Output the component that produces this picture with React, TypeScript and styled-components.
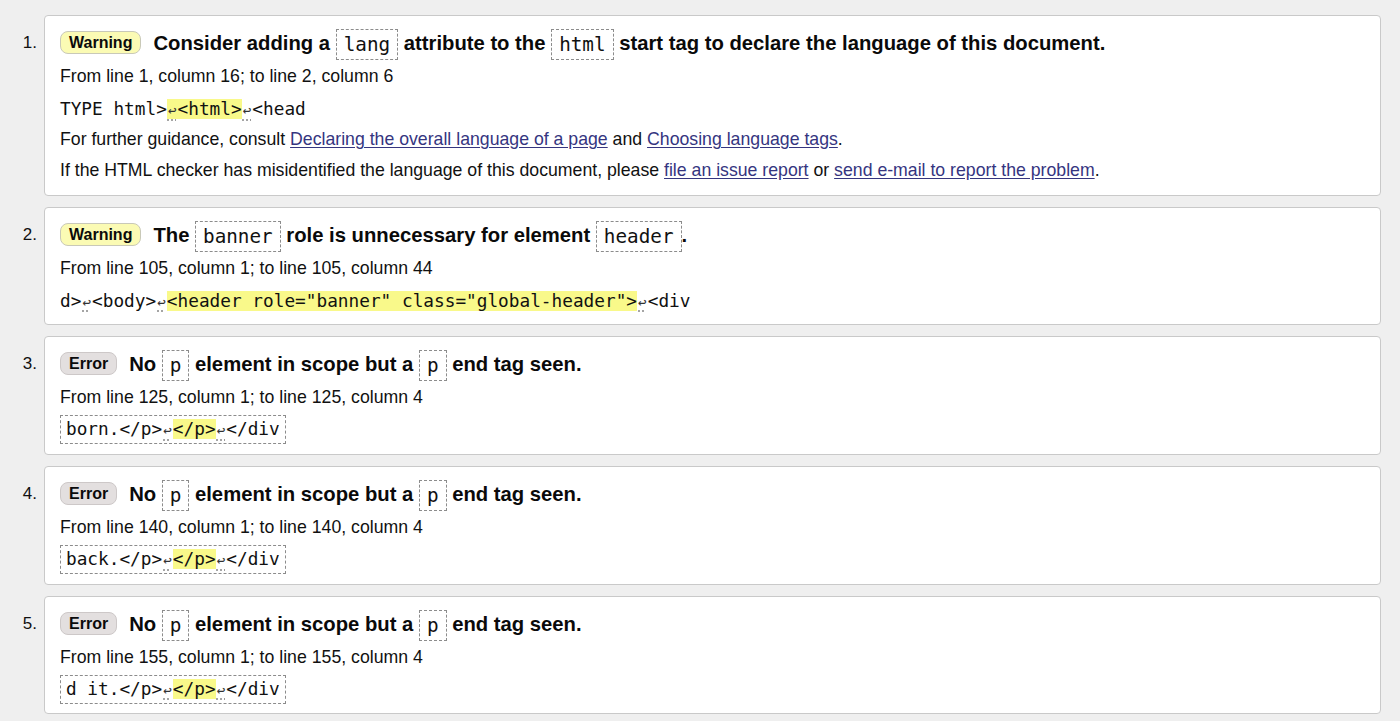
import React from "react";
import styled, { createGlobalStyle, css } from "styled-components";

const GlobalStyle = createGlobalStyle`
  html, body {
    margin: 0;
    padding: 0;
    background: #efefef;
  }
  body {
    font-family: "Liberation Sans", Arial, Helvetica, sans-serif;
    color: #111;
  }
`;

const List = styled.ol`
  list-style: none;
  margin: 0;
  padding: 15px 19px 0 0;
  display: flex;
  flex-direction: column;
  gap: 11px;
`;

const Item = styled.li`
  display: grid;
  grid-template-columns: 44px 1fr;
`;

const Num = styled.div`
  padding: 11px 7px 0 0;
  line-height: 34px;
  font-size: 17px;
  text-align: right;
  color: #111;
`;

const Card = styled.div`
  background: #fff;
  border: 1px solid #c9c9c9;
  border-radius: 4px;
  padding: 10px 15px 8.5px;
`;

const Title = styled.p`
  margin: 0 0 1px;
  font-size: 20.25px;
  font-weight: bold;
  line-height: 34px;
  color: #0a0a0a;
  white-space: nowrap;
`;

const Badge = styled.span<{ $kind: "warning" | "error" }>`
  display: inline-block;
  vertical-align: 2px;
  font-size: 16px;
  font-weight: bold;
  line-height: 21px;
  padding: 0 8px;
  margin-right: 12px;
  border-radius: 8px;
  ${(p) =>
    p.$kind === "warning"
      ? css`
          background: #fbfbb4;
          border: 1px solid #c9c9b8;
        `
      : css`
          background: #e3dfdf;
          border: 1px solid #cdc8c8;
        `}
`;

const Code = styled.code`
  display: inline-block;
  vertical-align: middle;
  font-family: "DejaVu Sans Mono", "Liberation Mono", monospace;
  font-weight: normal;
  font-size: 19.3px;
  line-height: 29px;
  padding: 0 7px;
  border: 1px dashed #8c8c8c;
  color: #111;
`;

const Line = styled.p`
  margin: 0;
  font-size: 17.7px;
  line-height: 31px;
  color: #111;
`;

const Link = styled.a`
  color: #35357f;
  text-decoration: underline;
  text-underline-offset: 2px;
`;

const Extract = styled.div`
  display: flex;
  align-items: flex-end;
  height: 32px;
`;

const ExtractCode = styled.code<{ $boxed?: boolean }>`
  display: inline-block;
  font-family: "DejaVu Sans Mono", "Liberation Mono", monospace;
  font-size: 17.75px;
  color: #111;
  white-space: pre;
  ${(p) =>
    p.$boxed
      ? css`
          line-height: 26px;
          padding: 0 5px;
          margin-bottom: 1px;
          border: 1px dashed #8c8c8c;
        `
      : css`
          line-height: 28px;
        `}
`;

const Mark = styled.mark`
  background: #f9f98a;
  color: inherit;
`;

const LfBox = styled.span`
  display: inline-block;
  width: 1ch;
  text-align: center;
  text-decoration: underline dotted #9a9a9a;
  text-underline-offset: 4px;
`;

const LfGlyph = styled.span`
  font-size: 0.8em;
  color: #333;
`;

const Lf = () => (
  <LfBox title="Line break">
    <LfGlyph>↩</LfGlyph>
  </LfBox>
);

export default function App() {
  return (
    <>
      <GlobalStyle />
      <List>
        <Item>
          <Num>1.</Num>
          <Card>
            <Title>
              <Badge $kind="warning">Warning</Badge>Consider adding a <Code>lang</Code> attribute to the{" "}
              <Code>html</Code> start tag to declare the language of this document.
            </Title>
            <Line>From line 1, column 16; to line 2, column 6</Line>
            <Extract>
              <ExtractCode>
                TYPE html&gt;
                <Mark>
                  <Lf />
                  &lt;html&gt;
                </Mark>
                <Lf />
                &lt;head
              </ExtractCode>
            </Extract>
            <Line>
              For further guidance, consult <Link href="#">Declaring the overall language of a page</Link> and{" "}
              <Link href="#">Choosing language tags</Link>.
            </Line>
            <Line>
              If the HTML checker has misidentified the language of this document, please{" "}
              <Link href="#">file an issue report</Link> or <Link href="#">send e-mail to report the problem</Link>.
            </Line>
          </Card>
        </Item>
        <Item>
          <Num>2.</Num>
          <Card>
            <Title>
              <Badge $kind="warning">Warning</Badge>The <Code>banner</Code> role is unnecessary for element{" "}
              <Code>header</Code>.
            </Title>
            <Line>From line 105, column 1; to line 105, column 44</Line>
            <Extract>
              <ExtractCode>
                d&gt;
                <Lf />
                &lt;body&gt;
                <Lf />
                <Mark>&lt;header role="banner" class="global-header"&gt;</Mark>
                <Lf />
                &lt;div
              </ExtractCode>
            </Extract>
          </Card>
        </Item>
        {[
          { n: 3, line: 125, pre: "born." },
          { n: 4, line: 140, pre: "back." },
          { n: 5, line: 155, pre: "d it." },
        ].map((e) => (
          <Item key={e.n}>
            <Num>{e.n}.</Num>
            <Card>
              <Title>
                <Badge $kind="error">Error</Badge>No <Code>p</Code> element in scope but a <Code>p</Code> end tag
                seen.
              </Title>
              <Line>
                From line {e.line}, column 1; to line {e.line}, column 4
              </Line>
              <Extract>
                <ExtractCode $boxed>
                  {e.pre}&lt;/p&gt;
                  <Lf />
                  <Mark>&lt;/p&gt;</Mark>
                  <Lf />
                  &lt;/div
                </ExtractCode>
              </Extract>
            </Card>
          </Item>
        ))}
      </List>
    </>
  );
}
